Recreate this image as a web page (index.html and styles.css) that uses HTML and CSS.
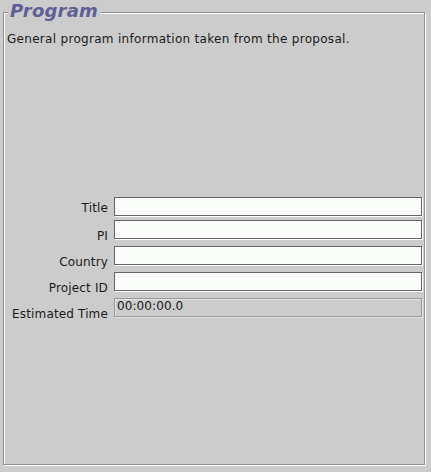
FILE: index.html
```html
<!DOCTYPE html>
<html>
<head>
<meta charset="utf-8">
<link rel="stylesheet" href="styles.css">
</head>
<body>
<div class="panel">
  <span class="panel-title">Program</span>
  <p class="desc">General program information taken from the proposal.</p>
  <div class="form">
    <div class="row row-title">
      <span class="lbl lbl-title">Title</span>
      <div class="field"></div>
    </div>
    <div class="row row-pi">
      <span class="lbl">PI</span>
      <div class="field"></div>
    </div>
    <div class="row">
      <span class="lbl">Country</span>
      <div class="field"></div>
    </div>
    <div class="row">
      <span class="lbl">Project ID</span>
      <div class="field"></div>
    </div>
    <div class="row">
      <span class="lbl">Estimated Time</span>
      <div class="field field-disabled">00:00:00.0</div>
    </div>
  </div>
</div>
</body>
</html>
```

FILE: styles.css
```css
html, body {
  margin: 0;
  padding: 0;
  background: #cccccc;
}
body {
  width: 431px;
  height: 472px;
  overflow: hidden;
  font-family: "DejaVu Sans", sans-serif;
  font-size: 12px;
  color: #1a1a1a;
}
.panel {
  position: relative;
  box-sizing: border-box;
  margin: 12px 0 0 3px;
  width: 422px;
  height: 453px;
  border: 1px solid #8f8f8f;
  box-shadow: inset 1px 1px 0 #ffffff, 1px 1px 0 #ffffff;
  padding: 19px 2px 0 3px;
}
.panel-title {
  position: absolute;
  left: 4px;
  top: -12px;
  padding: 0 3px 0 2px;
  background: #cccccc;
  font-size: 18px;
  line-height: 20px;
  font-weight: bold;
  font-style: italic;
  color: #5f5f95;
  letter-spacing: 0.2px;
}
.desc {
  margin: 0;
  line-height: 14px;
  letter-spacing: 0.3px;
}
.form {
  margin-top: 151px;
  display: flex;
  flex-direction: column;
}
.row {
  display: flex;
  align-items: flex-end;
  gap: 6px;
  margin-top: 7px;
}
.row-title {
  margin-top: 0;
}
.row-pi {
  margin-top: 4px;
}
.lbl {
  width: 101px;
  text-align: right;
  line-height: 6px;
  white-space: nowrap;
  letter-spacing: 0.15px;
}
.lbl-title {
  padding-bottom: 5px;
}
.field {
  box-sizing: border-box;
  flex: 1;
  height: 19px;
  background: #fbfdfb;
  border: 1px solid #666666;
  box-shadow: 1px 1px 0 #ffffff;
}
.field-disabled {
  background: #cccccc;
  border-color: #999999;
  box-shadow: inset 1px 1px 0 #e4e4e4, 1px 1px 0 #e4e4e4;
  padding-left: 2px;
  line-height: 15px;
  font-size: 12px;
  letter-spacing: 0.1px;
}
```
